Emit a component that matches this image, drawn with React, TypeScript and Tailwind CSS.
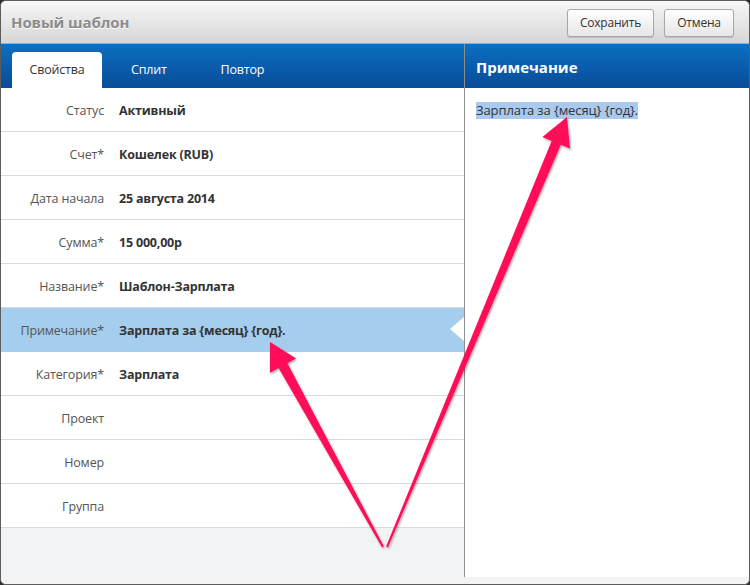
import React from "react";

const rows: { label: string; value: string; active?: boolean }[] = [
  { label: "Статус", value: "Активный" },
  { label: "Счет*", value: "Кошелек (RUB)" },
  { label: "Дата начала", value: "25 августа 2014" },
  { label: "Сумма*", value: "15 000,00р" },
  { label: "Название*", value: "Шаблон-Зарплата" },
  { label: "Примечание*", value: "Зарплата за {месяц} {год}.", active: true },
  { label: "Категория*", value: "Зарплата" },
  { label: "Проект", value: "" },
  { label: "Номер", value: "" },
  { label: "Группа", value: "" },
];

export default function App() {
  return (
    <div
      className="relative w-[750px] h-[585px] bg-[#2e2e2e] overflow-hidden"
      style={{ fontFamily: '"Open Sans", "Noto Sans", sans-serif' }}
    >
      <div className="flex flex-col w-[750px] h-[585px] rounded-[6px] border border-[#5c5c5c] overflow-hidden bg-[#f2f3f5]">
        {/* title bar */}
        <div className="h-[43px] shrink-0 flex items-center justify-between pl-[10px] pr-[15px] bg-gradient-to-b from-[#f7f7f7] to-[#d6d6d8] border-b border-[#a9a9a9]">
          <div className="text-[15px] font-bold text-[#8c8c8c] tracking-[-0.1px] [text-shadow:0_1px_0_#ffffff]">
            Новый шаблон
          </div>
          <div className="flex gap-[10px] pt-[1px]">
            <button className="h-[28px] w-[87px] rounded-[3px] border border-[#a8a8a8] bg-gradient-to-b from-[#ffffff] to-[#e6e6e6] text-[12px] tracking-[-0.2px] text-[#333] shadow-[0_1px_1px_rgba(0,0,0,0.15)]">
              Сохранить
            </button>
            <button className="h-[28px] w-[70px] rounded-[3px] border border-[#a8a8a8] bg-gradient-to-b from-[#ffffff] to-[#e6e6e6] text-[12px] tracking-[-0.2px] text-[#333] shadow-[0_1px_1px_rgba(0,0,0,0.15)]">
              Отмена
            </button>
          </div>
        </div>
        {/* body */}
        <div className="flex flex-1 min-h-0">
          {/* left */}
          <div className="w-[463px] shrink-0 flex flex-col">
            <div className="h-[44px] shrink-0 flex items-end pl-[11px] bg-gradient-to-b from-[#0c6fc2] to-[#094c97]">
              <div className="w-[90px] h-[36px] pt-[1px] rounded-t-[4px] bg-white flex items-center justify-center text-[12.5px] tracking-[-0.2px] text-[#333]">
                Свойства
              </div>
              <div className="h-[36px] pt-[1px] ml-[29px] flex items-center text-[12.5px] tracking-[-0.2px] text-white">
                Сплит
              </div>
              <div className="h-[36px] pt-[1px] ml-[54px] flex items-center text-[12.5px] tracking-[-0.2px] text-white">
                Повтор
              </div>
            </div>
            <div className="flex flex-col">
              {rows.map((r) => (
                <div
                  key={r.label}
                  className={
                    r.active
                      ? "relative h-[44px] pt-[3px] flex items-center bg-[#a4cdee] border-b border-[#a4cdee]"
                      : "relative h-[44px] pt-[3px] flex items-center bg-white border-b border-[#dadada]"
                  }
                >
                  <div className="w-[103px] text-right text-[12.5px] tracking-[-0.15px] text-[#555]">{r.label}</div>
                  <div className="ml-[15px] text-[12.5px] tracking-[-0.2px] font-bold text-[#333]">{r.value}</div>
                  {r.active && (
                    <div className="absolute right-0 top-[9px] w-0 h-0 border-y-[12px] border-y-transparent border-r-[14px] border-r-white" />
                  )}
                </div>
              ))}
            </div>
          </div>
          {/* divider */}
          <div className="w-px shrink-0 bg-[#8e8e8e]" />
          {/* right */}
          <div className="flex-1 flex flex-col">
            <div className="h-[44px] shrink-0 flex items-center pl-[11px] pt-[2px] bg-gradient-to-b from-[#0c6fc2] to-[#094c97] text-white text-[15px] font-bold">
              Примечание
            </div>
            <div className="flex-1 bg-white pl-[11px] pt-[9px]">
              <span className="text-[13px] tracking-[-0.1px] text-[#333] bg-[#a9c9ee] leading-[17px] inline-block">
                Зарплата за {"{месяц}"} {"{год}"}.
              </span>
            </div>
          </div>
        </div>
        <div className="h-[7px] shrink-0 bg-[#f2f3f5]" />
      </div>
      {/* arrows overlay */}
      <svg className="absolute inset-0 pointer-events-none" width="750" height="585" viewBox="0 0 750 585">
        <defs>
          <filter id="sh" x="-20%" y="-20%" width="140%" height="140%">
            <feDropShadow dx="1" dy="1.5" stdDeviation="1.2" floodColor="#000" floodOpacity="0.35" />
          </filter>
        </defs>
        <polygon
          filter="url(#sh)"
          fill="#ff1159"
          points="383.9,546.5 287.4,363.3 296.1,358.5 270,342 269.9,373 278.6,368.1 382.1,547.5"
        />
        <polygon
          filter="url(#sh)"
          fill="#ff1159"
          points="387.9,547.4 560.8,144.7 570,148.6 567,117 542.4,137 551.6,140.9 386.1,546.6"
        />
      </svg>
    </div>
  );
}
